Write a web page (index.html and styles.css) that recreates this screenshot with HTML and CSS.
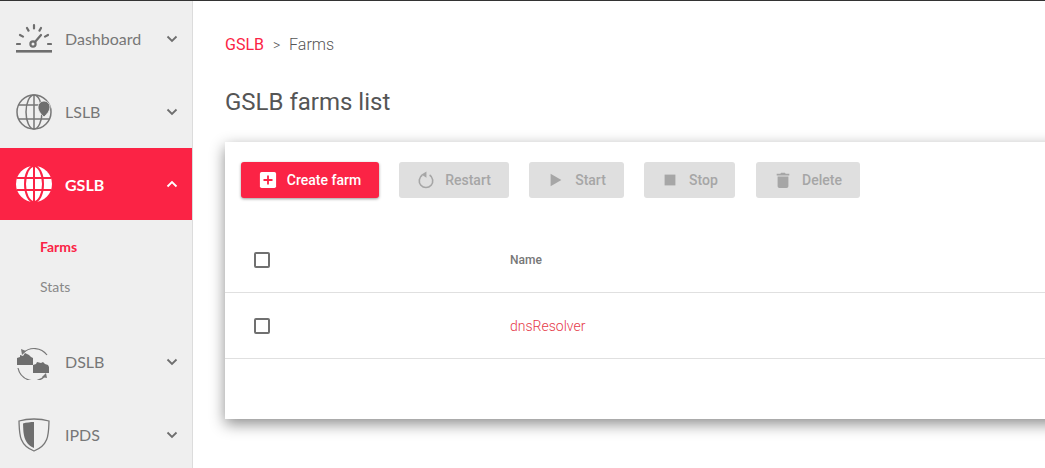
FILE: index.html
```html
<!DOCTYPE html>
<html>
<head>
    <title>GSLB farms list</title>
    <link rel="stylesheet" href="styles.css">
</head>
<body>
    <div class="layout">
        <div class="sidebar">
            <div class="menu-item">
                <svg class="menu-icon" viewBox="0 0 36 36">
                    <g fill="none" stroke="#6e6e6e" stroke-width="2.2" stroke-linecap="round">
                        <path d="M1 23h3M32 23h3M4 14l3 1.6M32 14l-3 1.6M11 7l1.5 2.6M25 7l-1.5 2.6M18 4v3.4"/>
                        <circle cx="17" cy="23" r="2.6"/>
                        <path d="M19 21l6-7"/>
                    </g>
                    <rect x="0" y="29" width="36" height="2.6" fill="#6e6e6e"/>
                </svg>
                <span class="menu-label">Dashboard</span>
                <svg class="chevron" viewBox="0 0 12 8"><path d="M1.5 1.5L6 6l4.500-4.500" fill="none" stroke="#6e6e6e" stroke-width="1.800"/></svg>
            </div>
            <div class="menu-item">
                <svg class="menu-icon" viewBox="0 0 36 36">
                    <g fill="none" stroke="#777" stroke-width="1.500">
                        <circle cx="18" cy="18" r="17"/>
                        <ellipse cx="18" cy="18" rx="8" ry="17"/>
                        <path d="M18 1v34M2 11h32M2 25h32"/>
                    </g>
                    <path d="M28 23c-3-3-6-6-6-10a6 6 0 0 1 12 0c0 4-3 7-6 10z" fill="#6e6e6e" stroke="#efefef" stroke-width="0.800"/>
                </svg>
                <span class="menu-label">LSLB</span>
                <svg class="chevron" viewBox="0 0 12 8"><path d="M1.5 1.5L6 6l4.500-4.500" fill="none" stroke="#6e6e6e" stroke-width="1.800"/></svg>
            </div>
            <div class="menu-item active">
                <svg class="menu-icon" viewBox="0 0 36 36">
                    <circle cx="18" cy="18" r="18" fill="#fff"/>
                    <g fill="none" stroke="#fb2345" stroke-width="2">
                        <ellipse cx="18" cy="18" rx="9" ry="18"/>
                        <path d="M18 0v36M1 12h34M1 24h34"/>
                    </g>
                </svg>
                <span class="menu-label">GSLB</span>
                <svg class="chevron" viewBox="0 0 12 8"><path d="M1.5 6.500L6 2l4.500 4.500" fill="none" stroke="#fff" stroke-width="1.800"/></svg>
            </div>
            <div class="submenu">
                <div class="submenu-item current">Farms</div>
                <div class="submenu-item">Stats</div>
            </div>
            <div class="menu-item">
                <svg class="menu-icon" viewBox="0 0 36 36">
                    <g fill="none" stroke="#777" stroke-width="1.200">
                        <path d="M7 9A16 16 0 0 1 31 11"/>
                        <path d="M2 24A16 16 0 0 0 29 32"/>
                    </g>
                    <path d="M5 5l5 2-4 4zM31 34l-5-1 4-4z" fill="#777"/>
                    <path d="M1 21v-7l3-1v-2l3 1 2-3 4 2 2 2 2 1v7zM17 29v-8l3-1 1-2 4 1 2-1 2 2 3 1 1 2v6z" fill="#6e6e6e"/>
                </svg>
                <span class="menu-label">DSLB</span>
                <svg class="chevron" viewBox="0 0 12 8"><path d="M1.5 1.5L6 6l4.500-4.500" fill="none" stroke="#6e6e6e" stroke-width="1.800"/></svg>
            </div>
            <div class="menu-item">
                <svg class="menu-icon" viewBox="0 0 36 36">
                    <path d="M18 2c5 0 11 .8 15 2-.5 12 .5 24-15 30C2.500 28 3.500 16 3 4c4-1.200 10-2 15-2z" fill="none" stroke="#777" stroke-width="1.300"/>
                    <path d="M18 5c-3 0-8 .5-11 1.500C7.500 16 7 26 18 31z" fill="#6e6e6e"/>
                </svg>
                <span class="menu-label">IPDS</span>
                <svg class="chevron" viewBox="0 0 12 8"><path d="M1.5 1.5L6 6l4.500-4.500" fill="none" stroke="#6e6e6e" stroke-width="1.800"/></svg>
            </div>
        </div>
        <div class="main">
            <div class="breadcrumb">
                <span class="crumb-link">GSLB</span>
                <span class="crumb-sep">&gt;</span>
                <span>Farms</span>
            </div>
            <h1 class="page-title">GSLB farms list</h1>
            <div class="card">
                <div class="toolbar">
                    <button class="btn btn-primary">
                        <svg class="btn-icon" viewBox="0 0 20 20">
                            <rect x="1" y="1" width="18" height="18" rx="2" fill="#fff"/>
                            <path d="M10 5v10M5 10h10" stroke="#fb2345" stroke-width="2"/>
                        </svg>
                        Create farm
                    </button>
                    <button class="btn btn-restart">
                        <svg class="btn-icon" viewBox="0 0 20 20">
                            <path d="M6 4.500a7.500 7.500 0 1 0 8 0" fill="none" stroke="#a6a6a6" stroke-width="1.800"/>
                            <path d="M10.500 0.500v7L5 4z" fill="#a6a6a6"/>
                        </svg>
                        Restart
                    </button>
                    <button class="btn btn-start">
                        <svg class="btn-icon" viewBox="0 0 20 20"><path d="M4 3l12 7-12 7z" fill="#a6a6a6"/></svg>
                        Start
                    </button>
                    <button class="btn btn-stop">
                        <svg class="btn-icon" viewBox="0 0 20 20"><rect x="4" y="4" width="12" height="12" fill="#a6a6a6"/></svg>
                        Stop
                    </button>
                    <button class="btn btn-delete">
                        <svg class="btn-icon" viewBox="0 0 20 20">
                            <path d="M3 3h4l1-1h4l1 1h4v2H3zM4 6h12v11a2 2 0 0 1-2 2H6a2 2 0 0 1-2-2z" fill="#a6a6a6"/>
                        </svg>
                        Delete
                    </button>
                </div>
                <div class="table-row table-head">
                    <div class="cell-check"><span class="checkbox"></span></div>
                    <div class="cell-name">Name</div>
                </div>
                <div class="table-row table-body">
                    <div class="cell-check"><span class="checkbox"></span></div>
                    <div class="cell-name farm-link">dnsResolver</div>
                </div>
            </div>
        </div>
    </div>
</body>
</html>
```

FILE: styles.css
```css
html, body {
    height: 100%;
}
body {
    margin: 0;
    font-family: Roboto, sans-serif;
    background-color: #fff;
    overflow: hidden;
}
.layout {
    display: flex;
    height: 468px;
    border-top: 1px solid #333;
    box-sizing: border-box;
}
.sidebar {
    width: 193px;
    flex-shrink: 0;
    box-sizing: border-box;
    padding-top: 1px;
    background-color: #efefef;
    border-right: 1px solid #dcdcdc;
    font-family: Lato, sans-serif;
    overflow: hidden;
}
.menu-item {
    display: flex;
    align-items: center;
    height: 73px;
    padding-left: 16px;
    color: #777;
}
.menu-item.active {
    height: 72px;
    background-color: #fb2345;
    color: #fff;
    font-weight: bold;
}
.menu-icon {
    width: 36px;
    height: 36px;
    flex-shrink: 0;
}
.menu-label {
    flex: 1;
    margin-left: 13px;
    font-size: 16px;
}
.chevron {
    width: 12px;
    height: 8px;
    margin-right: 14px;
    flex-shrink: 0;
}
.submenu {
    height: 105px;
    padding-top: 7px;
    box-sizing: border-box;
}
.submenu-item {
    height: 40px;
    line-height: 40px;
    padding-left: 40px;
    font-size: 14px;
    color: #888;
}
.submenu-item.current {
    color: #fb2345;
    font-weight: bold;
}
.main {
    flex: 1;
    padding-left: 32px;
    overflow: hidden;
}
.breadcrumb {
    margin-top: 35px;
    height: 18px;
    line-height: 18px;
    font-size: 16px;
    font-weight: 300;
    color: #555;
}
.crumb-link {
    color: #fb2345;
    font-weight: 400;
}
.crumb-sep {
    margin: 0 5px;
    font-size: 14px;
}
.page-title {
    margin: 0;
    padding-top: 34px;
    height: 56px;
    line-height: 28px;
    font-size: 24px;
    font-weight: 400;
    color: #555;
    box-sizing: content-box;
    height: 28px;
}
.card {
    width: 1000px;
    height: 277px;
    margin-top: 26px;
    background-color: #fff;
    box-shadow: 0 5px 14px rgba(0, 0, 0, 0.45);
}
.toolbar {
    display: flex;
    padding: 20px 16px 0;
    height: 36px;
    gap: 20px;
}
.btn {
    display: flex;
    align-items: center;
    justify-content: center;
    gap: 10px;
    height: 36px;
    padding: 0;
    border: none;
    border-radius: 3px;
    font-family: Roboto, sans-serif;
    font-size: 14px;
    font-weight: 500;
    background-color: #dfdfdf;
    color: #a6a6a6;
}
.btn-primary {
    width: 138px;
    background-color: #fb2345;
    color: #fff;
    box-shadow: 0 1px 3px rgba(0, 0, 0, 0.4);
}
.btn-restart {
    width: 110px;
}
.btn-start {
    width: 95px;
}
.btn-stop {
    width: 91px;
}
.btn-delete {
    width: 104px;
    margin-left: 1px;
}
.btn-icon {
    width: 18px;
    height: 18px;
}
.table-row {
    display: flex;
    align-items: center;
    border-bottom: 1px solid #e0e0e0;
}
.table-head {
    height: 87px;
    margin-top: 0;
    padding-top: 0;
    box-sizing: content-box;
    height: 66px;
    padding-top: 21px;
    box-sizing: border-box;
    margin-top: 8px;
    height: 87px;
    margin-top: -7px;
    margin-top: 8px;
}
.table-body {
    height: 65px;
}
.cell-check {
    width: 285px;
    padding-left: 29px;
    box-sizing: border-box;
    display: flex;
}
.checkbox {
    width: 12px;
    height: 12px;
    border: 2px solid #707070;
    border-radius: 2px;
}
.cell-name {
    font-size: 12px;
    font-weight: 500;
    color: #777;
}
.farm-link {
    font-size: 14px;
    font-weight: 300;
    color: #e53a4a;
}
```
